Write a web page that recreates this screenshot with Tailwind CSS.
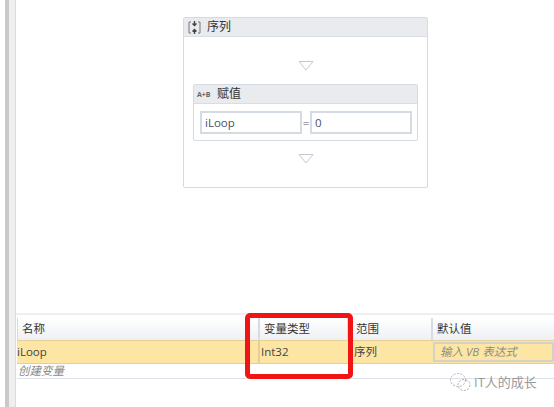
<!DOCTYPE html>
<html lang="en">
<head>
    <meta charset="UTF-8">
    <meta name="viewport" content="width=device-width, initial-scale=1.0">
    <title>Sequence Designer</title>
    <script src="https://cdn.jsdelivr.net/npm/@tailwindcss/browser@4"></script>
</head>
<body class="bg-white overflow-hidden">
    <div class="relative flex w-[554px] h-[407px] overflow-hidden bg-white font-['Open_Sans','Noto_Sans_CJK_SC',sans-serif] text-[11.5px] text-[#3c3c3c]">
        <!-- left edge -->
        <div class="w-[5px] shrink-0 bg-white"></div>
        <div class="w-[4px] shrink-0 bg-[#c9c9c9]"></div>
        <div class="w-[6px] shrink-0 bg-[#efefef]"></div>
        <div class="w-[1px] shrink-0 bg-[#dcdcdc]"></div>

        <div class="flex-1 min-w-0 flex flex-col">
            <!-- designer canvas -->
            <div class="h-[297px] shrink-0 pt-[17px] pl-[167px]">
                <div class="w-[245px] h-[171px] rounded-[2px] border border-[#d5dbe3] bg-white flex flex-col items-stretch">
                    <div class="h-[19px] shrink-0 bg-[#e9ebee] border-b border-[#d9dee5] flex items-center pl-[4px] gap-[6px]">
                        <svg width="13" height="15" viewBox="0 0 13 15" fill="none">
                            <path d="M3 2H1v11h2M10 2h2v11h-2" stroke="#777" stroke-width="1"/>
                            <path d="M6.500 1v4M4.500 3.500l2 2 2-2" stroke="#444" stroke-width="1.400"/>
                            <path d="M6.500 14v-4M4.500 11.500l2-2 2 2" stroke="#444" stroke-width="1.400"/>
                        </svg>
                        <span class="text-[12px] leading-none text-[#333]">序列</span>
                    </div>
                    <div class="flex justify-center pt-[24px]">
                        <svg width="16" height="10" viewBox="0 0 16 10" fill="none"><path d="M1 .5h14L8 9z" fill="#fff" stroke="#c3cad3"/></svg>
                    </div>
                    <div class="ml-[9px] mr-[9px] mt-[13px] h-[57px] rounded-[2px] border border-[#d5dbe3] flex flex-col">
                        <div class="h-[19px] shrink-0 bg-[#e9ebee] border-b border-[#d9dee5] flex items-center pl-[3px] gap-[6px]">
                            <span class="text-[7px] leading-none font-bold text-[#666] w-[14px] whitespace-nowrap">A+B</span>
                            <span class="text-[12px] leading-none text-[#333]">赋值</span>
                        </div>
                        <div class="flex items-center pl-[6px] pt-[7px] text-[11.5px]">
                            <div class="w-[102px] h-[23px] border-2 border-[#d5dbe5] flex items-center pl-[3px] text-[#4a4f63]">iLoop</div>
                            <div class="w-[8px] text-center text-[#555]">=</div>
                            <div class="w-[102px] h-[23px] border-2 border-[#d5dbe5] flex items-center pl-[3px] text-[#4a4f63]">0</div>
                        </div>
                    </div>
                    <div class="flex justify-center pt-[13px]">
                        <svg width="16" height="10" viewBox="0 0 16 10" fill="none"><path d="M1 .5h14L8 9z" fill="#fff" stroke="#c3cad3"/></svg>
                    </div>
                </div>
            </div>

            <!-- variables panel -->
            <div class="h-[2px] mt-[16px] shrink-0 bg-[#efefef]"></div>
            <div class="h-[3px] shrink-0 bg-white"></div>
            <div class="flex h-[22px] shrink-0 ml-[1px] bg-gradient-to-b from-white to-[#eef0f4] text-[#333] border-l border-[#d5d9e0]">
                <div class="w-[242px] border-r-2 border-[#d7dbe3] flex items-center pl-[4px]">名称</div>
                <div class="w-[89px] border-r-2 border-[#d7dbe3] flex items-center pl-[4px]">变量类型</div>
                <div class="w-[84px] border-r-2 border-[#d7dbe3] flex items-center pl-[7px]">范围</div>
                <div class="flex-1 flex items-center pl-[4px]">默认值</div>
            </div>
            <div class="flex h-[24px] shrink-0 ml-[1px] bg-[#fde5a3] border-y border-[#e5cf94] text-[#444]">
                <div class="w-[243px] border-r-2 border-[#e5cf94] flex items-center">iLoop</div>
                <div class="w-[89px] flex items-center pl-[1px]">Int32</div>
                <div class="w-[84px] flex items-center pl-[5px]">序列</div>
                <div class="flex-1 my-[1px] border-2 border-[#d4d2c8] flex items-center pl-[5px] italic text-[#8c8c86]">输入 VB 表达式</div>
            </div>
            <div class="h-[15px] shrink-0 ml-[1px] border-b border-[#dde0e8] pl-[1px] flex items-center italic text-[#8a8a8a]">创建变量</div>
        </div>

        <!-- red highlight -->
        <div class="absolute left-[245px] top-[313px] w-[108px] h-[66px] border-[5px] border-[#f01414] rounded-[5px]"></div>

        <!-- watermark -->
        <div class="absolute left-[449px] top-[372px] flex items-center gap-[3px] text-[13px] text-[#999]">
            <svg width="22" height="20" viewBox="0 0 22 20" fill="none" stroke="#aaa" stroke-width="1" stroke-dasharray="2 1.500">
                <ellipse cx="9" cy="8" rx="7.500" ry="6.500"/>
                <ellipse cx="15" cy="13" rx="6" ry="5.500"/>
            </svg>
            <span class="leading-none whitespace-nowrap">IT人的成长</span>
        </div>
    </div>
</body>
</html>
